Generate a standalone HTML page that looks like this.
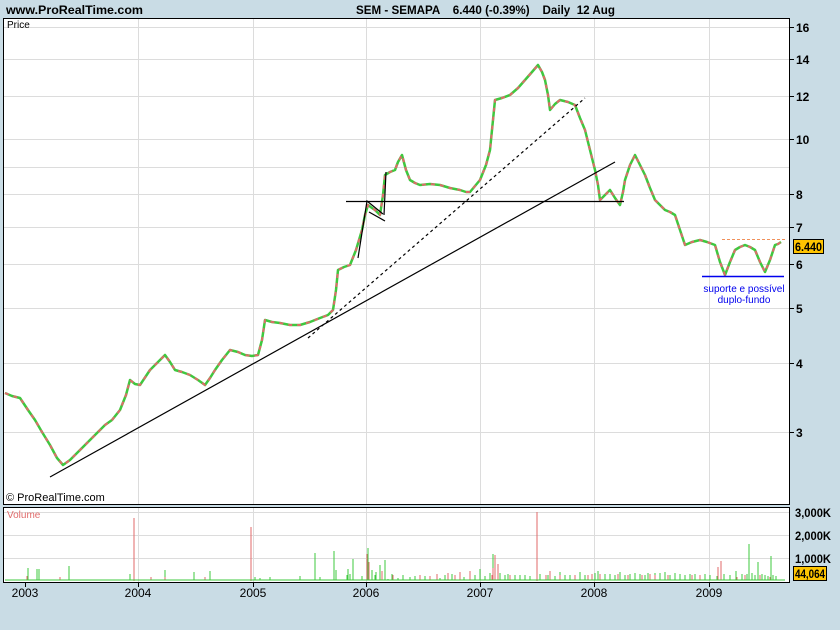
<!DOCTYPE html>
<html><head><meta charset="utf-8"><style>
html,body{margin:0;padding:0;background:#c9dce5;width:840px;height:630px;overflow:hidden}
svg{display:block}
text{font-family:"Liberation Sans",sans-serif}
</style></head><body>
<svg width="840" height="630" xmlns="http://www.w3.org/2000/svg">
<rect width="840" height="630" fill="#c9dce5"/>
<text x="6" y="14" font-size="12" font-weight="bold" fill="#000" textLength="137" lengthAdjust="spacingAndGlyphs">www.ProRealTime.com</text>
<text x="356" y="14" font-size="12" font-weight="bold" fill="#000" textLength="259" lengthAdjust="spacingAndGlyphs" xml:space="preserve">SEM - SEMAPA    6.440 (-0.39%)    Daily  12 Aug</text>
<rect x="3.5" y="18.5" width="786" height="486" fill="#fff" stroke="#000"/>
<g stroke="#dcdcdc" stroke-width="1">
<line x1="138.5" y1="19" x2="138.5" y2="504"/><line x1="253.5" y1="19" x2="253.5" y2="504"/>
<line x1="366.5" y1="19" x2="366.5" y2="504"/><line x1="480.5" y1="19" x2="480.5" y2="504"/>
<line x1="594.5" y1="19" x2="594.5" y2="504"/><line x1="709.5" y1="19" x2="709.5" y2="504"/>
<line x1="4" y1="27.5" x2="789" y2="27.5"/><line x1="4" y1="59.5" x2="789" y2="59.5"/>
<line x1="4" y1="96.5" x2="789" y2="96.5"/><line x1="4" y1="139.5" x2="789" y2="139.5"/>
<line x1="4" y1="167.5" x2="789" y2="167.5"/><line x1="4" y1="194.5" x2="789" y2="194.5"/>
<line x1="4" y1="227.5" x2="789" y2="227.5"/><line x1="4" y1="264.5" x2="789" y2="264.5"/>
<line x1="4" y1="308.5" x2="789" y2="308.5"/><line x1="4" y1="363.5" x2="789" y2="363.5"/>
<line x1="4" y1="432.5" x2="789" y2="432.5"/>
</g>
<text x="7" y="28" font-size="10" fill="#000">Price</text>
<text x="6" y="501" font-size="11" fill="#000">© ProRealTime.com</text>
<g font-size="12" font-weight="bold" fill="#000">
<text x="796" y="32">16</text><text x="796" y="64">14</text><text x="796" y="101">12</text>
<text x="796" y="144">10</text><text x="796" y="199">8</text><text x="796" y="232">7</text>
<text x="796" y="269">6</text><text x="796" y="313">5</text><text x="796" y="368">4</text>
<text x="796" y="437">3</text>
</g>
<g stroke="#000"><line x1="790" y1="27.5" x2="794" y2="27.5"/><line x1="790" y1="59.5" x2="794" y2="59.5"/><line x1="790" y1="96.5" x2="794" y2="96.5"/><line x1="790" y1="139.5" x2="794" y2="139.5"/><line x1="790" y1="194.5" x2="794" y2="194.5"/><line x1="790" y1="227.5" x2="794" y2="227.5"/><line x1="790" y1="264.5" x2="794" y2="264.5"/><line x1="790" y1="308.5" x2="794" y2="308.5"/><line x1="790" y1="363.5" x2="794" y2="363.5"/><line x1="790" y1="432.5" x2="794" y2="432.5"/></g>
<polyline fill="none" stroke="#3ec83e" stroke-width="2.5" stroke-linejoin="round" points="5,393 12,396 20,398 28,410 35,420 42,432 50,445 57,458 63,465 70,460 75,455 82,448 90,440 98,432 105,425 112,420 120,410 126,395 130,380 135,384 140,385 146,376 150,370 158,362 165,355 170,362 175,370 182,372 190,375 198,380 205,385 210,378 215,370 222,360 230,350 238,352 245,355 252,356 258,355 262,340 265,320 272,322 280,323 290,325 300,325 310,322 320,318 328,315 333,310 336,290 338,270 344,267 350,265 356,250 362,230 365,215 368,205 372,208 375,210 380,215 383,195 385,175 390,172 395,170 398,162 402,155 406,170 410,180 415,183 420,185 430,184 440,185 450,188 460,190 466,192 470,192 475,186 480,180 486,165 490,150 493,120 495,100 502,98 510,95 518,88 525,80 532,72 538,65 542,72 545,80 548,95 550,110 555,104 560,100 568,102 575,105 580,118 585,130 590,150 595,170 598,185 600,200 605,195 610,190 615,198 620,205 623,192 625,180 630,165 635,155 640,165 645,175 650,188 655,200 660,205 665,210 670,212 675,215 680,230 685,245 692,242 700,240 707,242 715,245 720,262 725,275 730,262 735,250 740,247 745,245 750,247 755,250 760,262 765,272 770,260 775,245 778,244 781,242"/>
<polyline fill="none" stroke="#e06a6a" stroke-width="2" stroke-dasharray="4 5" stroke-linejoin="round" points="5,393 12,396 20,398 28,410 35,420 42,432 50,445 57,458 63,465 70,460 75,455 82,448 90,440 98,432 105,425 112,420 120,410 126,395 130,380 135,384 140,385 146,376 150,370 158,362 165,355 170,362 175,370 182,372 190,375 198,380 205,385 210,378 215,370 222,360 230,350 238,352 245,355 252,356 258,355 262,340 265,320 272,322 280,323 290,325 300,325 310,322 320,318 328,315 333,310 336,290 338,270 344,267 350,265 356,250 362,230 365,215 368,205 372,208 375,210 380,215 383,195 385,175 390,172 395,170 398,162 402,155 406,170 410,180 415,183 420,185 430,184 440,185 450,188 460,190 466,192 470,192 475,186 480,180 486,165 490,150 493,120 495,100 502,98 510,95 518,88 525,80 532,72 538,65 542,72 545,80 548,95 550,110 555,104 560,100 568,102 575,105 580,118 585,130 590,150 595,170 598,185 600,200 605,195 610,190 615,198 620,205 623,192 625,180 630,165 635,155 640,165 645,175 650,188 655,200 660,205 665,210 670,212 675,215 680,230 685,245 692,242 700,240 707,242 715,245 720,262 725,275 730,262 735,250 740,247 745,245 750,247 755,250 760,262 765,272 770,260 775,245 778,244 781,242"/>
<line x1="50" y1="477" x2="615" y2="162" stroke="#000" stroke-width="1.2"/>
<line x1="308" y1="338" x2="585" y2="98" stroke="#000" stroke-width="1.2" stroke-dasharray="3 3"/>
<line x1="346" y1="201.5" x2="624" y2="201.5" stroke="#000" stroke-width="1.2"/>
<polyline points="358,258 367,201 383,214" fill="none" stroke="#000" stroke-width="1.2"/>
<line x1="369" y1="212" x2="385" y2="221" stroke="#000" stroke-width="1.2"/>
<line x1="384" y1="215" x2="386" y2="172" stroke="#000" stroke-width="1.2"/>
<line x1="722" y1="239.5" x2="786" y2="239.5" stroke="#f0905a" stroke-width="1" stroke-dasharray="3 2"/>
<line x1="702" y1="276.5" x2="784" y2="276.5" stroke="#0000ee" stroke-width="1.5"/>
<text x="744" y="292" font-size="10" fill="#0000ee" text-anchor="middle">suporte e possível</text>
<text x="744" y="303" font-size="10" fill="#0000ee" text-anchor="middle">duplo-fundo</text>
<rect x="793.5" y="239.5" width="30" height="14" fill="#ffc400" stroke="#000"/>
<text x="795" y="251" font-size="12" font-weight="bold" fill="#000" textLength="27" lengthAdjust="spacingAndGlyphs">6.440</text>
<rect x="3.5" y="507.5" width="786" height="75" fill="#fff" stroke="#000"/>
<g stroke="#dcdcdc"><line x1="138.5" y1="508" x2="138.5" y2="582"/><line x1="253.5" y1="508" x2="253.5" y2="582"/><line x1="366.5" y1="508" x2="366.5" y2="582"/><line x1="480.5" y1="508" x2="480.5" y2="582"/><line x1="594.5" y1="508" x2="594.5" y2="582"/><line x1="709.5" y1="508" x2="709.5" y2="582"/>
<line x1="4" y1="512.5" x2="789" y2="512.5"/><line x1="4" y1="535.5" x2="789" y2="535.5"/><line x1="4" y1="558.5" x2="789" y2="558.5"/></g>
<text x="7" y="518" font-size="10" fill="#e06a6a">Volume</text>
<path stroke="#3ec83e" stroke-width="1" d="M28,580V568M37,580V569M39,580V569M69,580V566M130,580V574M165,580V570M194,580V572M210,580V571M255,580V577M260,580V578M270,580V577M300,580V576M320,580V577M336,580V577M347,580V575M350,580V574M362,580V576M367,580V579M375,580V575M380,580V576M388,580V579M398,580V578M410,580V577M430,580V578M440,580V578M460,580V574M464,580V577M470,580V576M480,580V569M485,580V576M490,580V573M493,580V554M500,580V573M505,580V575M515,580V575M520,580V575M530,580V576M540,580V574M548,580V575M560,580V572M570,580V575M580,580V572M595,580V573M598,580V571M605,580V574M615,580V575M620,580V572M630,580V574M640,580V574M648,580V573M655,580V573M660,580V573M665,580V572M680,580V574M690,580V574M700,580V575M710,580V575M717,580V576M724,580V574M736,580V571M747,580V574M749,580V544M752,580V573M758,580V562M765,580V575M771,580V556M776,580V576M315,580V553M334,580V551M336,580V570M348,580V569M353,580V559M368,580V548M380,580V565M385,580V560M372,580V570M376,580V572M392,580V574M403,580V575M415,580V576M425,580V576M445,580V575M452,580V574M475,580V575M508,580V574M525,580V575M555,580V576M565,580V575M585,580V575M610,580V574M625,580V575M635,580V573M645,580V575M670,580V575M675,580V573M685,580V575M695,580V574M705,580V574M730,580V575M742,580V574M755,580V575M762,580V574M768,580V576M773,580V575"/>
<path stroke="#e06a6a" stroke-width="1" d="M134,581V518M251,581V527M537,581V512M493,580V568M495,580V555M498,580V564M367,580V554M369,580V562M382,580V571M393,580V575M420,580V575M437,580V574M448,580V573M470,580V571M492,580V575M546,580V575M550,580V571M575,580V575M588,580V575M600,580V574M618,580V574M642,580V575M655,580V575M692,580V575M718,580V567M721,580V561M737,580V577M770,580V577M27,580V576M60,580V577M151,580V577M165,580V577M205,580V577M460,580V572M430,580V576M455,580V575M510,580V575M560,580V575M592,580V574M628,580V575M650,580V574M668,580V575M700,580V575M745,580V575M760,580V575"/>
<path stroke="#3ec83e" stroke-width="1" d="M5,580H785"/>
<g font-size="12" font-weight="bold" fill="#000"><text x="795" y="517" textLength="36" lengthAdjust="spacingAndGlyphs">3,000K</text><text x="795" y="540" textLength="36" lengthAdjust="spacingAndGlyphs">2,000K</text><text x="795" y="563" textLength="36" lengthAdjust="spacingAndGlyphs">1,000K</text></g>
<rect x="793.5" y="566.5" width="33" height="14" fill="#ffc400" stroke="#000"/>
<text x="795" y="578" font-size="12" font-weight="bold" fill="#000" textLength="30" lengthAdjust="spacingAndGlyphs">44,064</text>
<g font-size="12" fill="#000" text-anchor="middle"><text x="25" y="597">2003</text><text x="138" y="597">2004</text><text x="253" y="597">2005</text><text x="366" y="597">2006</text><text x="480" y="597">2007</text><text x="594" y="597">2008</text><text x="709" y="597">2009</text></g>
<g stroke="#000"><line x1="25.5" y1="583" x2="25.5" y2="587"/><line x1="138.5" y1="583" x2="138.5" y2="587"/><line x1="253.5" y1="583" x2="253.5" y2="587"/><line x1="366.5" y1="583" x2="366.5" y2="587"/><line x1="480.5" y1="583" x2="480.5" y2="587"/><line x1="594.5" y1="583" x2="594.5" y2="587"/><line x1="709.5" y1="583" x2="709.5" y2="587"/></g>
</svg>
</body></html>
